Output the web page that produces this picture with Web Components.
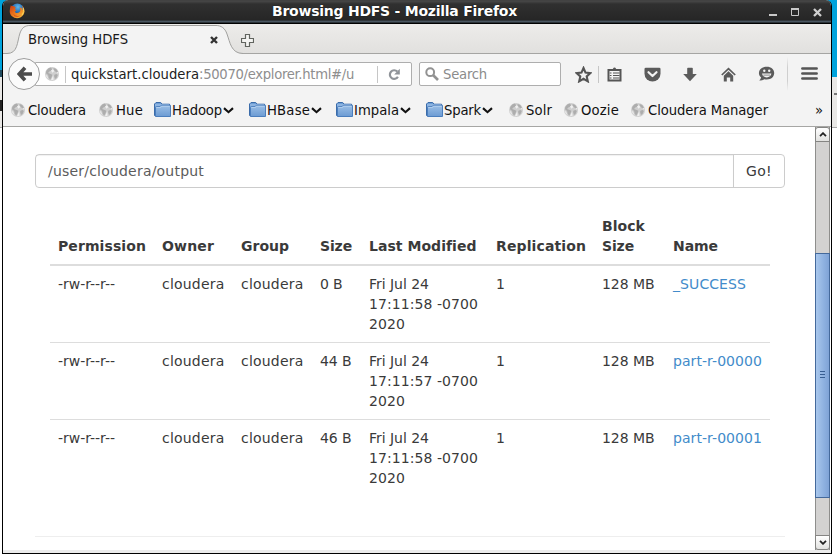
<!DOCTYPE html>
<html lang="en">
<head>
<meta charset="utf-8">
<title>Browsing HDFS</title>
<style>
html,body{margin:0;padding:0;width:837px;height:554px;overflow:hidden}
body{font-family:"DejaVu Sans",sans-serif}
</style>
</head>
<body>
<desk-top></desk-top>
<script>
const define=(name,css,html,after)=>customElements.define(name,class extends HTMLElement{
  connectedCallback(){
    if(this.shadowRoot)return;
    const t=document.createElement('template');
    t.innerHTML='<style>*{box-sizing:border-box}'+css+'</style>'+(typeof html==='function'?html(this):html);
    this.attachShadow({mode:'open'}).append(t.content.cloneNode(true));
    if(after)after(this);
  }
});

/* Text tracked so that it fills the width given in "w". */
define('fit-text',':host{display:inline-block;white-space:pre;flex:none}','<slot></slot>',el=>{
  const w=+el.getAttribute('w'),n=el.textContent.length;
  const nat=el.getBoundingClientRect().width;
  if(w&&n)el.style.letterSpacing=((w-nat)/n).toFixed(3)+'px';
});

const icons={
 firefox:[16,16,'<defs><radialGradient id="a" cx=".55" cy=".25" r=".7"><stop offset="0" stop-color="#62b8ea"/><stop offset=".6" stop-color="#2166b0"/><stop offset="1" stop-color="#173c79"/></radialGradient><linearGradient id="b" x1="0" y1="0" x2="1" y2="1"><stop offset="0" stop-color="#c93714"/><stop offset=".5" stop-color="#ee7b1d"/><stop offset="1" stop-color="#f8c842"/></linearGradient></defs><circle cx="8.3" cy="7.4" r="6.8" fill="url(#a)"/><path d="M1.8 2.2C2.4 3 3.2 3.2 4.2 3.1L6.8 4.3 5.8 6.1 7.4 7.2 5.8 8.4C6.5 10.2 8.5 10.3 10 9.5 11.6 8.3 11.8 6 10.5 4.5 13 4.4 13.4 6.3 13.4 7.2 14.3 6.3 13.7 3.7 12.8 2.5 15.4 4.5 16.4 8.3 14.6 11.5 12.2 15.6 6.5 16.3 3 13.3-.2 10.5.5 6.5 1.8 2.2Z" fill="url(#b)"/><path d="M4 10.5Q7 14.4 12 12.2 9 15 5.5 13.3Z" fill="#d7471a" opacity=".75"/><path d="M14.2 5Q15.7 8.6 13.2 12" fill="none" stroke="#fbd65b"/>'],
 min:[8,8,'<path d="M0 7h8" stroke="#c9c9c9" stroke-width="2"/>'],
 max:[8,8,'<path d="M.5 1v6.5h7V1" fill="none" stroke="#c9c9c9"/><path d="M0 1h8" stroke="#c9c9c9" stroke-width="2"/>'],
 close:[9,9,'<path d="M1 1l7 7M8 1L1 8" stroke="#d0d0d0" stroke-width="2.3"/>'],
 tabx:[8,8,'<path d="M1 1l6 6M7 1L1 7" stroke="#333" stroke-width="2.4"/>'],
 plus:[13,13,'<path d="M4.5.5h4v4h4v4h-4v4h-4v-4h-4v-4h4z" fill="#f4f4f2" stroke="#61645f" stroke-width="1.2"/>'],
 back:[15,16,'<path d="M8 1.8L2.3 8l5.7 6.2M2.8 8H15" fill="none" stroke="#4c4c4c" stroke-width="3.7"/>'],
 globe:[14,14,'<circle cx="7" cy="7" r="7" fill="#cfcfcf"/><path d="M3.3 1.6L5.6.6 7.1 2l-.6 1.5-1.8.8L3 6.1l2.2.7 2.1 1-.7 2.4-1.5 2.5-1.5-2.2-.5-2.6L1 6.2Q1 3.5 3.3 1.6ZM8.700 1l2.600.9L13 5.100l-2 .2-1.200-1.500-1.700-.4ZM9.300 7.700l2.300-.8 1.200 1-1.100 2.900-1.700 1.100-.8-2.300Z" fill="#adadad"/><path d="M6 3.500L8 2l1.300 2L7.500 5.700ZM.6 7.600l1.700 1.600 1.100 2.800Q1.200 10.500.6 7.600ZM8.200 8.600l.4 4.200-2.600.4 1.400-3.100ZM11.500 6.300h1.700l-.5-1.500Z" fill="#f0f0f0"/>'],
 folder:[17,15,'<defs><linearGradient id="f" x1="0" y1="0" x2="0" y2="1"><stop offset="0" stop-color="#9bbfe6"/><stop offset="1" stop-color="#6c9bd3"/></linearGradient></defs><path d="M.5 13.5V2L2 .5h4.700L8 2.200h7.500v12H1.300Z" fill="#6f9fd6" stroke="#3b6caa"/><path d="M1 3h14" stroke="#adc9ec"/><path d="M1.500 14V5.500l1-1H6L7.200 3.300h9.300V14.500H2Z" fill="url(#f)" stroke="#4b7ebd"/><path d="M2.400 5.400h4L7.700 4.200h7.900" fill="none" stroke="#bfd8f2" stroke-width=".8"/>'],
 chev:[11,7,'<path d="M1 1.100l4.500 4.100L10 1.100" fill="none" stroke="#111" stroke-width="2.100"/>'],
 reload:[13,13,'<path d="M9.900 8.700A4.300 4.300 0 1 1 9.300 3.600" fill="none" stroke="#8f9399" stroke-width="2.200"/><path d="M11.800.8v5.700H6.200Z" fill="#8f9399"/>'],
 search:[14,14,'<circle cx="5.200" cy="5.200" r="3.900" fill="none" stroke="#929292" stroke-width="2"/><path d="M8 8l5 5" stroke="#929292" stroke-width="2.700"/>'],
 star:[17,17,'<path d="M8.500 2l2 4.600 4.900.5-3.700 3.300 1.100 4.900-4.300-2.500-4.300 2.500 1.100-4.900L1.600 7.100l4.900-.5Z" fill="none" stroke="#555" stroke-width="2.100"/>'],
 clip:[15,15,'<path d="M1.500 3h12v10.500H1.500Z" fill="#f3f3f3" stroke="#555" stroke-width="2"/><path d="M4.500 3.500V2h1.300Q7.500-.8 9.200 2h1.300v1.500Z" fill="#555"/><path d="M2.800 6h1.700M6 6h6.500M2.800 8.500h1.700M6 8.500h6.500M2.800 11h1.700M6 11h6.500" stroke="#555" stroke-width="1.200"/>'],
 pocket:[17,15,'<path d="M1.800.7h13.400q1.300 0 1.300 1.300v4.800a8 7.600 0 0 1-16 0V2Q.5.7 1.800.7Z" fill="#5b5b5b"/><path d="M4.500 5.200l4 3.800 4-3.800" fill="none" stroke="#f3f3f3" stroke-width="2.200" stroke-linecap="round" stroke-linejoin="round"/>'],
 down:[14,15,'<path d="M4.200 1.500q0-.8.8-.8h4q.8 0 .8.8V7h4L7 14.300.2 7h4Z" fill="#5b5b5b"/>'],
 home:[15,15,'<path d="M.8 8L7.500 1.600 14.200 8" fill="none" stroke="#5b5b5b" stroke-width="1.700"/><path d="M2.800 8.700L7.500 4.200l4.700 4.500V14.500H9.200v-4H5.800v4h-3Z" fill="#5b5b5b"/>'],
 chat:[17,16,'<path d="M8.800.7c4.400 0 7.400 2.700 7.400 6.400s-3 6.500-7.400 6.500c-1 0-1.900-.1-2.700-.4-1.200 1-2.900 1.400-4.800 1.200 1-.7 1.600-1.600 1.800-2.800C1.700 10.400.9 8.900.9 7.100.9 3.400 4.200.7 8.800.7Z" fill="#5b5b5b"/><circle cx="6.300" cy="4.800" r="1.200" fill="#f3f3f3"/><circle cx="11.200" cy="4.800" r="1.200" fill="#f3f3f3"/><path d="M4 7.600h9.400q-.8 3.800-4.700 3.800T4 7.600Z" fill="#f3f3f3"/><path d="M5.300 9.100h6.800" stroke="#5b5b5b" stroke-width=".7"/>'],
 menu:[17,13,'<path d="M1.400 1.500h14.200M1.400 6.500h14.200M1.400 11.500h14.200" stroke="#555" stroke-width="2.700" stroke-linecap="round"/>'],
 up:[8,5,'<path d="M1 4.200l3-3 3 3" fill="none" stroke="#222" stroke-width="1.800"/>'],
 dn:[8,5,'<path d="M1 .8l3 3 3-3" fill="none" stroke="#222" stroke-width="1.800"/>']
};
define('ui-icon',':host{display:block;flex:none}svg{display:block}',el=>{
  const [w,h,d]=icons[el.getAttribute('name')];
  return `<svg width="${w}" height="${h}" viewBox="0 0 ${w} ${h}">${d}</svg>`;
});

define('title-bar',`:host{display:grid;grid-template-columns:259px auto 1fr;align-items:center;height:24px;padding:0 9px 2px 6px;
 background:linear-gradient(#3c3c3c 0,#484848 1px,#303030 4px,#262626 20px,#3d4852 21px,#56646f 22px,#000 23px);color:#fff;font:bold 14px "DejaVu Sans",sans-serif;border-radius:5px 5px 0 0}
 .c{display:flex;justify-content:flex-end;align-items:center;gap:14px;padding-top:2px}
 .t{padding-left:4px;text-shadow:0 0 1px #000}`,
 `<ui-icon name="firefox"></ui-icon><span class="t"><fit-text w="245">Browsing HDFS - Mozilla Firefox</fit-text></span><div class="c"><ui-icon name="min"></ui-icon><ui-icon name="max"></ui-icon><ui-icon name="close"></ui-icon></div>`);

define('tab-strip',`:host{display:flex;height:30px;background:linear-gradient(#edecea,#e1e0de);box-shadow:inset 0 -1px #a5a5a3;color:#1a1a1a;font:14.67px/17px "DejaVu Sans Condensed","DejaVu Sans",sans-serif}
 .tab{display:grid;width:240px;height:30px}.tab>*{grid-area:1/1}.in{display:flex;justify-content:space-between;align-items:center;padding:0 25px 0 25px}
 fit-text{padding-bottom:2px}ui-icon[name=tabx]{margin-top:2px}.new{margin:10px 0 0 -2px}svg{display:block}`,
 `<div class="tab"><svg width="240" height="30"><path d="M0 29.5H4C15 29.5 14 18 17 9 19 3.500 22 1.500 27 1.500H213C218 1.500 222 4 224 10 227 18 228 29.500 240 29.500V30H0Z" fill="#f3f3f3"/><path d="M0 29.500H4C15 29.500 14 18 17 9 19 3.500 22 1.500 27 1.500H213C218 1.500 222 4 224 10 227 18 228 29.500 240 29.500" fill="none" stroke="#a0a09e"/></svg><div class="in"><fit-text w="100">Browsing HDFS</fit-text><ui-icon name="tabx"></ui-icon></div></div><ui-icon class="new" name="plus"></ui-icon>`);

define('nav-bar',`:host{display:flex;align-items:center;height:43px;padding:0 0 3px 5px;background:#f3f3f3;color:#222;font:14.67px/20px "DejaVu Sans Condensed","DejaVu Sans",sans-serif}
 .back{width:32px;height:32px;border:1px solid #9d9d9d;border-radius:50%;background:#fbfbfb;display:flex;align-items:center;justify-content:center;z-index:1;flex:none}
 .url,.s{display:flex;align-items:center;height:24px;border:1px solid #aeaeae;background:#fff;flex:none}
 .url{width:377px;margin-left:-5px;padding-left:9px;border-radius:0 2px 2px 0}.s{width:142px;margin-left:7px;padding-left:5px;border-radius:2px;color:#8b8b8b;gap:4px}
 .v{width:1px;height:17px;background:#c6c6c6;flex:none}.g{color:#8e8e8e}.sp{flex:1}
 .tools{display:grid;flex:none;grid-template-columns:32px 1px 30px 46px 30px 46px 30px 6px 1px 42px;justify-items:center;align-items:center;margin-left:5px}
 ui-icon[name=star]{margin-left:2px}ui-icon[name=menu]{margin-bottom:1px}`,
 `<div class="back"><ui-icon name="back"></ui-icon></div><div class="url"><ui-icon name="globe"></ui-icon><i class="v" style="margin:0 5px 0 6px"></i><fit-text w="128">quickstart.cloudera</fit-text><fit-text class="g" w="155">:50070/explorer.html#/u</fit-text><i class="sp"></i><i class="v" style="margin-right:10px"></i><ui-icon name="reload" style="margin-right:10px"></ui-icon></div>
 <div class="s"><ui-icon name="search"></ui-icon><fit-text w="44">Search</fit-text></div>
 <div class="tools"><ui-icon name="star"></ui-icon><i class="v"></i><ui-icon name="clip"></ui-icon><ui-icon name="pocket"></ui-icon><ui-icon name="down"></ui-icon><ui-icon name="home"></ui-icon><ui-icon name="chat"></ui-icon><i></i><i class="v" style="height:34px;background:linear-gradient(#f3f3f3,#cfcfcf 30% 70%,#f3f3f3)"></i><ui-icon name="menu"></ui-icon></div>`);

define('book-mark',`:host{display:flex;align-items:center}ui-icon[name=chev]{margin:1px 0 0 1px}.i{width:17px;flex:none;padding-top:1px}.f{width:18px;padding:0}`,
 el=>{const f=el.hasAttribute('folder');return `<span class="i ${f?'f':''}"><ui-icon name="${f?'folder':'globe'}"></ui-icon></span><fit-text w="${el.getAttribute('w')}">${el.getAttribute('label')}</fit-text>${f?'<ui-icon name="chev"></ui-icon>':''}`;});
define('bookmarks-bar',`:host{display:grid;grid-template-columns:88px 55px 95px 87px 90px 83px 55px 67px 184px auto;justify-content:start;align-items:center;height:30px;padding:0 0 4px 8px;background:#f3f3f3;border-bottom:1px solid #a6a6a4;color:#111;font:14.67px/20px "DejaVu Sans Condensed","DejaVu Sans",sans-serif}`,
 `<book-mark label="Cloudera" w="58"></book-mark><book-mark label="Hue" w="27"></book-mark><book-mark folder label="Hadoop" w="50"></book-mark><book-mark folder label="HBase" w="43"></book-mark><book-mark folder label="Impala" w="45"></book-mark><book-mark folder label="Spark" w="37"></book-mark><book-mark label="Solr" w="26"></book-mark><book-mark label="Oozie" w="38"></book-mark><book-mark label="Cloudera Manager" w="120"></book-mark><span>»</span>`);

define('path-form',`:host{display:flex;height:34px;border:1px solid #ccc;border-radius:4px;color:#5c5c5c;font-size:14px;line-height:32px}
 .p{flex:1;padding-left:12px;box-shadow:inset 0 1px 1px rgba(0,0,0,.06)}.b{width:51px;border-left:1px solid #ccc;color:#3a3a3a;padding-left:12px}`,
 `<div class="p"><fit-text w="156">/user/cloudera/output</fit-text></div><div class="b"><fit-text w="26">Go!</fit-text></div>`);

const cell=(t,w)=>`<div>${t.map((s,i)=>`<fit-text w="${w[i]}">${s}</fit-text>`).join('<br>')}</div>`;
define('file-row',`:host{display:grid;grid-template-columns:104px 79px 79px 49px 127px 106px 71px 105px;padding:8px 0;line-height:20px;font-size:14px;color:#3a3a3a;border-top:1px solid #ddd}
 :host([first]){border-top:0}:host([head]){font-weight:bold;align-items:end;border-top:0;border-bottom:2px solid #ddd}
 div{padding-left:8px}fit-text{vertical-align:top}:host(:not([head])) div:last-child{color:#428bca}`,
 el=>{
  if(el.hasAttribute('head'))return cell(['Permission'],[88])+cell(['Owner'],[52])+cell(['Group'],[48])+cell(['Size'],[32])+cell(['Last Modified'],[107])+cell(['Replication'],[90])+cell(['Block','Size'],[43,32])+cell(['Name'],[45]);
  const a=n=>el.getAttribute(n);
  return cell(['-rw-r--r--'],[57])+cell(['cloudera'],[62.5])+cell(['cloudera'],[62.5])+cell([a('size')],[a('sw')])+cell(['Fri Jul 24',a('time')+' -0700','2020'],[60,109,36])+cell(['1'],[9])+cell(['128 MB'],[52.5])+cell([a('name')],[a('nw')]);
 });
define('file-table',':host{display:block;margin:0 15px}','<slot></slot>');

define('scroll-bar',`:host{display:flex;flex-direction:column;width:15px;background:#d3d2d1;border:solid #8e8e8c;border-width:0 1px}
 .b{height:15px;margin:0 -1px;border:1px solid #858583;border-radius:3px 3px 0 0;background:linear-gradient(#fff,#e2e2e0);display:flex;align-items:center;justify-content:center}
 .e{border-radius:0 0 3px 3px}.t{height:245px;margin:111px -1px 0;border:1px solid #44699b;background:linear-gradient(90deg,#a9c7ec,#8eb1e0 60%,#7fa3d6);display:flex;flex-direction:column;justify-content:center;align-items:center;gap:2px;padding-bottom:2px}
 .t i{width:5px;height:1px;background:#385e92}.sp{flex:1}`,
 `<div class="b"><ui-icon name="up"></ui-icon></div><div class="t"><i></i><i></i><i></i></div><div class="sp"></div><div class="b e"><ui-icon name="dn"></ui-icon></div>`);

define('page-view',`:host{display:flex;height:423px;background:#fff;font-family:"DejaVu Sans",sans-serif}
 main{width:750px;margin-left:32px;display:flex;flex-direction:column}hr{margin:0;border:0;border-top:1px solid #eee;height:0;flex:none}
 .a{margin:6px 15px 20px}file-table{margin-top:20px}.z{margin-top:40px}scroll-bar{margin-left:30px}`,
 `<main><hr class="a"><path-form></path-form><file-table><file-row head></file-row><file-row first size="0 B" sw="22.500" time="17:11:58" name="_SUCCESS" nw="73"></file-row><file-row size="44 B" sw="31.500" time="17:11:57" name="part-r-00000" nw="89"></file-row><file-row size="46 B" sw="31.500" time="17:11:58" name="part-r-00001" nw="89"></file-row></file-table><hr class="z"></main><scroll-bar></scroll-bar>`);

define('browser-window',`:host{display:block;flex:none;width:830px;height:554px;border:1px solid #000;border-top:0;border-radius:6px 6px 0 0;background:#ebebeb;overflow:hidden}`,
 `<title-bar></title-bar><tab-strip></tab-strip><nav-bar></nav-bar><bookmarks-bar></bookmarks-bar><page-view></page-view>`);

define('desk-top',`:host{display:flex;width:837px;height:554px;background:linear-gradient(#00a3dc 0 77px,#e9e8e6 77px 127px,#a9a9a9 127px 128px,#fff 128px);overflow:hidden}
 .l{width:2px;flex:none;display:flex;flex-direction:column}.l i{width:2px;height:7px;margin-top:70px;background:#234d61}.l i+i{height:11px;margin-top:23px;background:#222}
 .r{width:5px}.r i{display:block;margin:93px 0 0 2px;height:2px;background:#777}`,
 `<div class="l"><i></i><i></i></div><browser-window></browser-window><div class="r"><i></i></div>`);
</script>
</body>
</html>
